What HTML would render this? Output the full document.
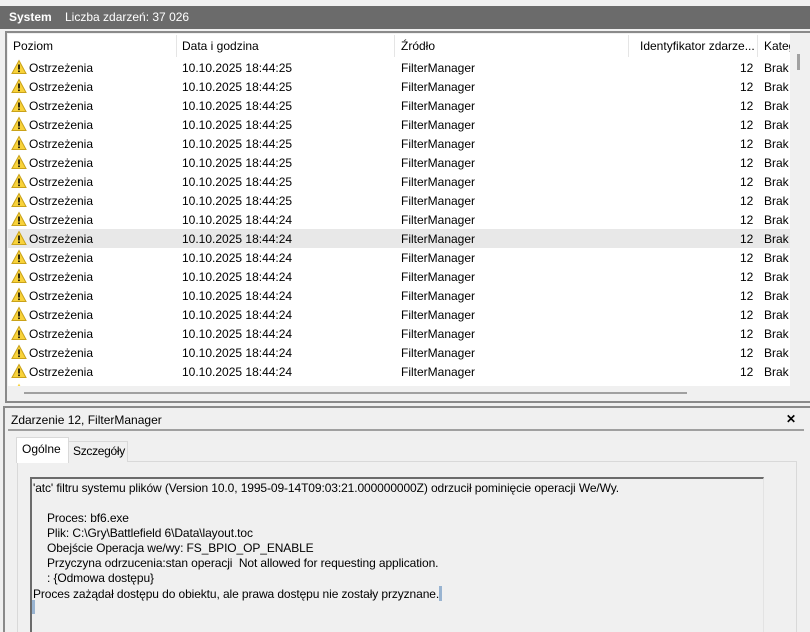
<!DOCTYPE html>
<html><head><meta charset="utf-8"><style>
*{margin:0;padding:0;box-sizing:border-box}
html{width:810px;height:632px;overflow:hidden}
body{width:810px;height:632px;overflow:hidden;background:#f0f0f0;font-family:"Liberation Sans",sans-serif;font-size:12px;color:#000;position:relative}
.a{position:absolute;white-space:nowrap}
.row{position:absolute;left:8px;width:782px;height:19px}
.row span{position:absolute;top:3px}
.ic{position:absolute;left:3px;top:1px}
.ind{padding-left:14px}
</style></head><body>
<div class="a" style="left:0;top:6px;width:810px;height:23px;background:#6b6b6b"></div>
<div class="a" style="left:9px;top:10px;color:#fff;font-weight:bold;font-size:12px">System</div>
<div class="a" style="left:65px;top:10px;color:#fff">Liczba zdarzeń: 37 026</div>
<div class="a" style="left:5px;top:31px;width:805px;height:372px;border:2px solid #8a8a8a;border-right:none;background:#f0f0f0"></div>
<div class="a" style="left:8px;top:34px;width:782px;height:352px;background:#fff"></div>
<div class="a" style="left:13px;top:39px">Poziom</div>
<div class="a" style="left:176px;top:35px;width:1px;height:22px;background:#e5e5e5"></div>
<div class="a" style="left:182px;top:39px">Data i godzina</div>
<div class="a" style="left:394px;top:35px;width:1px;height:22px;background:#e5e5e5"></div>
<div class="a" style="left:401px;top:39px">Źródło</div>
<div class="a" style="left:628px;top:35px;width:1px;height:22px;background:#e5e5e5"></div>
<div class="a" style="left:640px;top:39px">Identyfikator zdarze...</div>
<div class="a" style="left:757px;top:35px;width:1px;height:22px;background:#e5e5e5"></div>
<div class="a" style="left:764px;top:39px;width:26px;overflow:hidden">Kategoria</div>
<div class="a" style="left:792px;top:34px;width:16px;height:352px;background:#f0f0f0"></div>
<div class="a" style="left:797px;top:54px;width:3px;height:16px;background:#a0a0a0"></div>
<div class="a" style="left:24px;top:392px;width:663px;height:2px;background:#a0a0a0"></div>
<div id="rows"></div>
<div class="a" style="left:3px;top:406px;width:807px;height:226px;border-left:2px solid #8a8a8a;border-top:2px solid #8a8a8a"></div>
<div class="a" style="left:11px;top:413px">Zdarzenie 12, FilterManager</div>
<div class="a" style="left:786px;top:412px;font-weight:bold;font-size:12px">✕</div>
<div class="a" style="left:8px;top:429px;width:796px;height:2px;background:#a0a0a0"></div>
<div class="a" style="left:17px;top:461px;width:780px;height:171px;border:1px solid #d9d9d9;border-bottom:none;background:#f0f0f0"></div>
<div class="a" style="left:68px;top:441px;width:60px;height:21px;border:1px solid #d9d9d9;border-bottom:none;background:#f0f0f0"></div>
<div class="a" style="left:73px;top:444px;letter-spacing:-0.3px">Szczegóły</div>
<div class="a" style="left:16px;top:437px;width:53px;height:26px;border:1px solid #d9d9d9;border-bottom:none;background:#fff"></div>
<div class="a" style="left:22px;top:442px">Ogólne</div>
<div class="a" style="left:30px;top:477px;width:734px;height:155px;border-left:2px solid #6b6b6b;border-top:2px solid #6b6b6b;border-right:1px solid #e3e3e3;background:#f0f0f0"></div>
<div class="a" style="left:33px;top:481px;line-height:15px;letter-spacing:-0.1px">'atc' filtru systemu plików (Version 10.0, 1995-09-14T09:03:21.000000000Z) odrzucił pominięcie operacji We/Wy.<br><br><div class="ind">Proces: bf6.exe</div><div class="ind">Plik: C:\Gry\Battlefield 6\Data\layout.toc</div><div class="ind">Obejście Operacja we/wy: FS_BPIO_OP_ENABLE</div><div class="ind">Przyczyna odrzucenia:stan operacji&nbsp; Not allowed for requesting application.</div><div class="ind">: {Odmowa dostępu}</div>Proces zażądał dostępu do obiektu, ale prawa dostępu nie zostały przyznane.<span style="display:inline-block;width:3px;height:15px;background:#99b4d1;vertical-align:-3px"></span></div>
<div class="a" style="left:32px;top:600px;width:3px;height:14px;background:#99b4d1"></div>
<script>
var h='';
for(var i=0;i<17;i++){
 var y=58+i*19, t=i<8?'25':'24', bg=i==9?'#e8e8e8':'#fff';
 h+='<div class="row" style="top:'+y+'px;background:'+bg+'"><svg class="ic" width="16" height="16" viewBox="0 0 16 16"><path d="M8 1.5L15 14.5H1Z" fill="#f8d23a" stroke="#c9a21a" stroke-width="1"/><rect x="7.2" y="5.5" width="1.6" height="5" fill="#000"/><rect x="7.2" y="11.5" width="1.6" height="1.6" fill="#000"/></svg><span style="left:21px">Ostrzeżenia</span><span style="left:174px">10.10.2025 18:44:'+t+'</span><span style="left:393px">FilterManager</span><span style="left:732px">12</span><span style="left:756px">Brak</span></div>';
}
h+='<div class="row" style="top:381px;height:5px;overflow:hidden"><svg class="ic" width="16" height="16" viewBox="0 0 16 16"><path d="M8 1.5L15 14.5H1Z" fill="#f8d23a"/></svg></div>';
document.getElementById('rows').innerHTML=h;
</script>
</body></html>
